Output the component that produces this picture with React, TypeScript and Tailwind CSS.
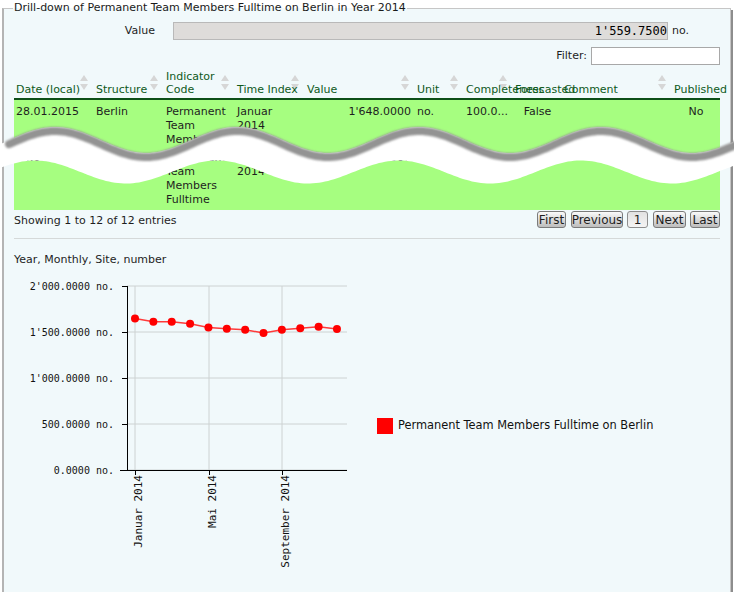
import React from 'react';

type Col = { label: string; sort: boolean };

const cols: Col[] = [
  { label: 'Date (local)', sort: true },
  { label: 'Structure', sort: true },
  { label: 'Indicator Code', sort: true },
  { label: 'Time Index', sort: true },
  { label: 'Value', sort: true },
  { label: 'Unit', sort: true },
  { label: 'Completeness', sort: true },
  { label: 'Forecasted', sort: false },
  { label: 'Comment', sort: true },
  { label: 'Published', sort: false },
];

const gridCols = 'grid grid-cols-[80px_70px_71px_70px_110px_49px_49px_49px_110px_48px]';

const firstRow = ['28.01.2015', 'Berlin', 'Permanent Team Members Fulltime', 'Januar 2014', "1'648.0000", 'no.', '100.0...', 'False', '', 'No'];
const lastRow = ['13.01.2015', 'Berlin', 'Permanent Team Members Fulltime', 'Dezember 2014', "1'532.0000", 'no.', '100.0...', 'False', '', 'No'];

const values = [1648, 1612, 1612, 1590, 1550, 1536, 1525, 1489, 1525, 1540, 1558, 1532];

function SortArrows() {
  return (
    <svg width="8" height="15" viewBox="0 0 8 15" className="absolute top-[6px] right-[6px]">
      <polygon points="4,0 8,6 0,6" fill="#d6d6d6" />
      <polygon points="0,9 8,9 4,15" fill="#d6d6d6" />
    </svg>
  );
}

function Row({ cells }: { cells: string[] }) {
  return (
    <div className={`${gridCols} bg-[#a6fe80] text-[#1e1e1e] leading-[14px] pt-[5px] pb-[3px]`}>
      {cells.map((c, i) => {
        let align = 'pl-[2px] pr-[4px]';
        if (i === 4) align = 'pr-[4px] text-right';
        if (i === 6) align = 'pl-[2px] whitespace-nowrap';
        if (i === 7 || i === 9) align = 'text-center';
        return (
          <div key={i} className={align}>
            {c}
          </div>
        );
      })}
    </div>
  );
}

function Chart() {
  const xs = values.map((_, i) => 121 + i * 18.36);
  const ys = values.map((v) => 198 - v * 0.092);
  const gridY = [14, 60, 106, 152, 198];
  const yLabels = ["2'000.0000 no.", "1'500.0000 no.", "1'000.0000 no.", '500.0000 no.', '0.0000 no.'];
  const gridX = [121, 195, 268];
  const xLabels = ['Januar 2014', 'Mai 2014', 'September 2014'];
  const line = xs.map((x, i) => `${i ? 'L' : 'M'}${x.toFixed(1)},${ys[i].toFixed(1)}`).join(' ');

  return (
    <svg width="350" height="320" className="shrink-0">
      {gridY.map((y) => (
        <line key={y} x1="113" x2="333" y1={y} y2={y} stroke="#cdd2d2" strokeWidth="1" />
      ))}
      {gridX.map((x) => (
        <line key={x} x1={x} x2={x} y1="14" y2="198" stroke="#cdd2d2" strokeWidth="1" />
      ))}
      <line x1="113.5" x2="113.5" y1="14" y2="198" stroke="#000" strokeWidth="1" />
      <line x1="106" x2="333" y1="198.5" y2="198.5" stroke="#000" strokeWidth="1" />
      {gridY.map((y) => (
        <line key={`t${y}`} x1="108" x2="113" y1={y + 0.5} y2={y + 0.5} stroke="#000" strokeWidth="1" />
      ))}
      {gridX.map((x) => (
        <line key={`tx${x}`} x1={x + 0.5} x2={x + 0.5} y1="198" y2="203" stroke="#000" strokeWidth="1" />
      ))}
      {yLabels.map((t, i) => (
        <text
          key={t}
          x="100"
          y={gridY[i] + 3.5}
          textAnchor="end"
          fontSize="10"
          fill="#111"
          fontFamily="'DejaVu Sans Mono', monospace"
        >
          {t}
        </text>
      ))}
      {xLabels.map((t, i) => (
        <text
          key={t}
          transform={`translate(${gridX[i] + 7},203) rotate(-90)`}
          textAnchor="end"
          fontSize="11"
          fill="#111"
          fontFamily="'DejaVu Sans Mono', monospace"
        >
          {t}
        </text>
      ))}
      <path d={line} fill="none" stroke="#ff3a3a" strokeWidth="1.5" />
      {xs.map((x, i) => (
        <circle key={i} cx={x} cy={ys[i]} r="4" fill="#ff0000" />
      ))}
    </svg>
  );
}

// torn-screenshot edge drawn over the table
function Tear() {
  const top = 110;
  const up = (x: number) => 140 - 13 * Math.cos((2 * Math.PI * (x - 55)) / 182) - top;
  const low = (x: number) => 172 - 11.5 * Math.cos((2 * Math.PI * (x - 35)) / 182) - top;
  const fwd: string[] = [];
  for (let x = 0; x <= 736; x += 3) fwd.push(`${x},${up(x).toFixed(1)}`);
  const back: string[] = [];
  for (let x = 736; x >= 0; x -= 3) back.push(`${x},${low(x).toFixed(1)}`);
  const shadow: string[] = [];
  for (let x = 9; x <= 740; x += 3) shadow.push(`${x},${(up(x) + 4).toFixed(1)}`);

  return (
    <svg width="734" height="90" className="absolute left-0 top-[110px]">
      <defs>
        <filter id="soft" x="-5%" y="-50%" width="110%" height="200%">
          <feGaussianBlur stdDeviation="1.2" />
        </filter>
      </defs>
      <polygon points={`${fwd.join(' ')} ${back.join(' ')}`} fill="#ffffff" />
      <polyline
        points={shadow.join(' ')}
        fill="none"
        stroke="#939393"
        strokeWidth="8"
        strokeLinecap="round"
        filter="url(#soft)"
      />
    </svg>
  );
}

export default function App() {
  return (
    <div className="relative w-[734px] h-[592px] overflow-hidden bg-white pt-[1px] font-['DejaVu_Sans',sans-serif] text-[11px] text-[#1e1e1e]">
      <fieldset className="ml-[2px] w-[729px] h-[640px] min-w-0 border-t border-r border-l-2 border-b-0 border-[#c6c6c6] border-l-[#b4b4b4] bg-[#f1f9fb] pl-[10px] pr-[10px] shadow-[2px_2px_0_#8d8d8d]">
        <legend className="-ml-[1px] px-[1px] leading-[14px] text-[#1a1a1a]">
          Drill-down of Permanent Team Members Fulltime on Berlin in Year 2014
        </legend>

        {/* Value */}
        <div className="mt-[7px] flex h-[18px] items-center">
          <span className="w-[141px] text-right">Value</span>
          <div className="ml-[18px] flex h-[18px] w-[495px] items-center justify-end border border-[#b9b9b9] bg-[#dedcda] font-['DejaVu_Sans_Mono',monospace] text-[12px] text-black">
            1'559.7500
          </div>
          <span className="ml-[4px]">no.</span>
        </div>

        {/* Filter */}
        <div className="mt-[7px] flex h-[18px] items-center justify-end">
          <span>Filter:</span>
          <div className="ml-[4px] h-[18px] w-[129px] border border-[#a8a8a8] bg-white" />
        </div>

        {/* Table header */}
        <div className={`${gridCols} mt-[4px] h-[31px] border-b-2 border-[#0d4f18] leading-[13px] text-[#0f5a1c]`}>
          {cols.map((c) => (
            <div key={c.label} className="relative flex items-end pl-[2px] pr-[4px] pb-[2px]">
              {c.sort && <SortArrows />}
              <span className="relative">{c.label}</span>
            </div>
          ))}
        </div>

        {/* Rows (first and last) */}
        <div className="h-[46px] overflow-hidden">
          <Row cells={firstRow} />
        </div>
        <Row cells={lastRow} />

        {/* Info + pager */}
        <div className="mt-[1px] flex h-[17px] items-center justify-between">
          <span className="mt-[3px]">Showing 1 to 12 of 12 entries</span>
          <div className="flex h-[17px] items-stretch text-[12px] leading-none">
            <div className="flex w-[29px] items-center justify-center rounded-[3px] border border-[#7b7b7b] bg-linear-to-b from-[#fafafa] to-[#bdbdbd]">First</div>
            <div className="ml-[5px] flex w-[52px] items-center justify-center rounded-[3px] border border-[#7b7b7b] bg-linear-to-b from-[#fafafa] to-[#bdbdbd]">Previous</div>
            <div className="ml-[4px] flex w-[21px] items-center justify-center rounded-[3px] border border-[#8e8e8e] bg-linear-to-b from-[#e2e2e2] to-[#f4f4f4]">1</div>
            <div className="ml-[5px] flex w-[33px] items-center justify-center rounded-[3px] border border-[#7b7b7b] bg-linear-to-b from-[#fafafa] to-[#bdbdbd]">Next</div>
            <div className="ml-[4px] flex w-[30px] items-center justify-center rounded-[3px] border border-[#7b7b7b] bg-linear-to-b from-[#fafafa] to-[#bdbdbd]">Last</div>
          </div>
        </div>

        <div className="mt-[10px] border-t border-[#d5d9d9]" />

        <div className="mt-[14px] leading-[14px]">Year, Monthly, Site, number</div>

        {/* Chart + legend */}
        <div className="mt-[5px] flex items-start">
          <Chart />
          <div className="ml-[13px] mt-[145px] flex items-center">
            <span className="h-4 w-4 bg-[#ff0000]" />
            <span className="ml-[5px] text-[11.4px] text-[#111]">Permanent Team Members Fulltime on Berlin</span>
          </div>
        </div>
      </fieldset>

      <Tear />
    </div>
  );
}
